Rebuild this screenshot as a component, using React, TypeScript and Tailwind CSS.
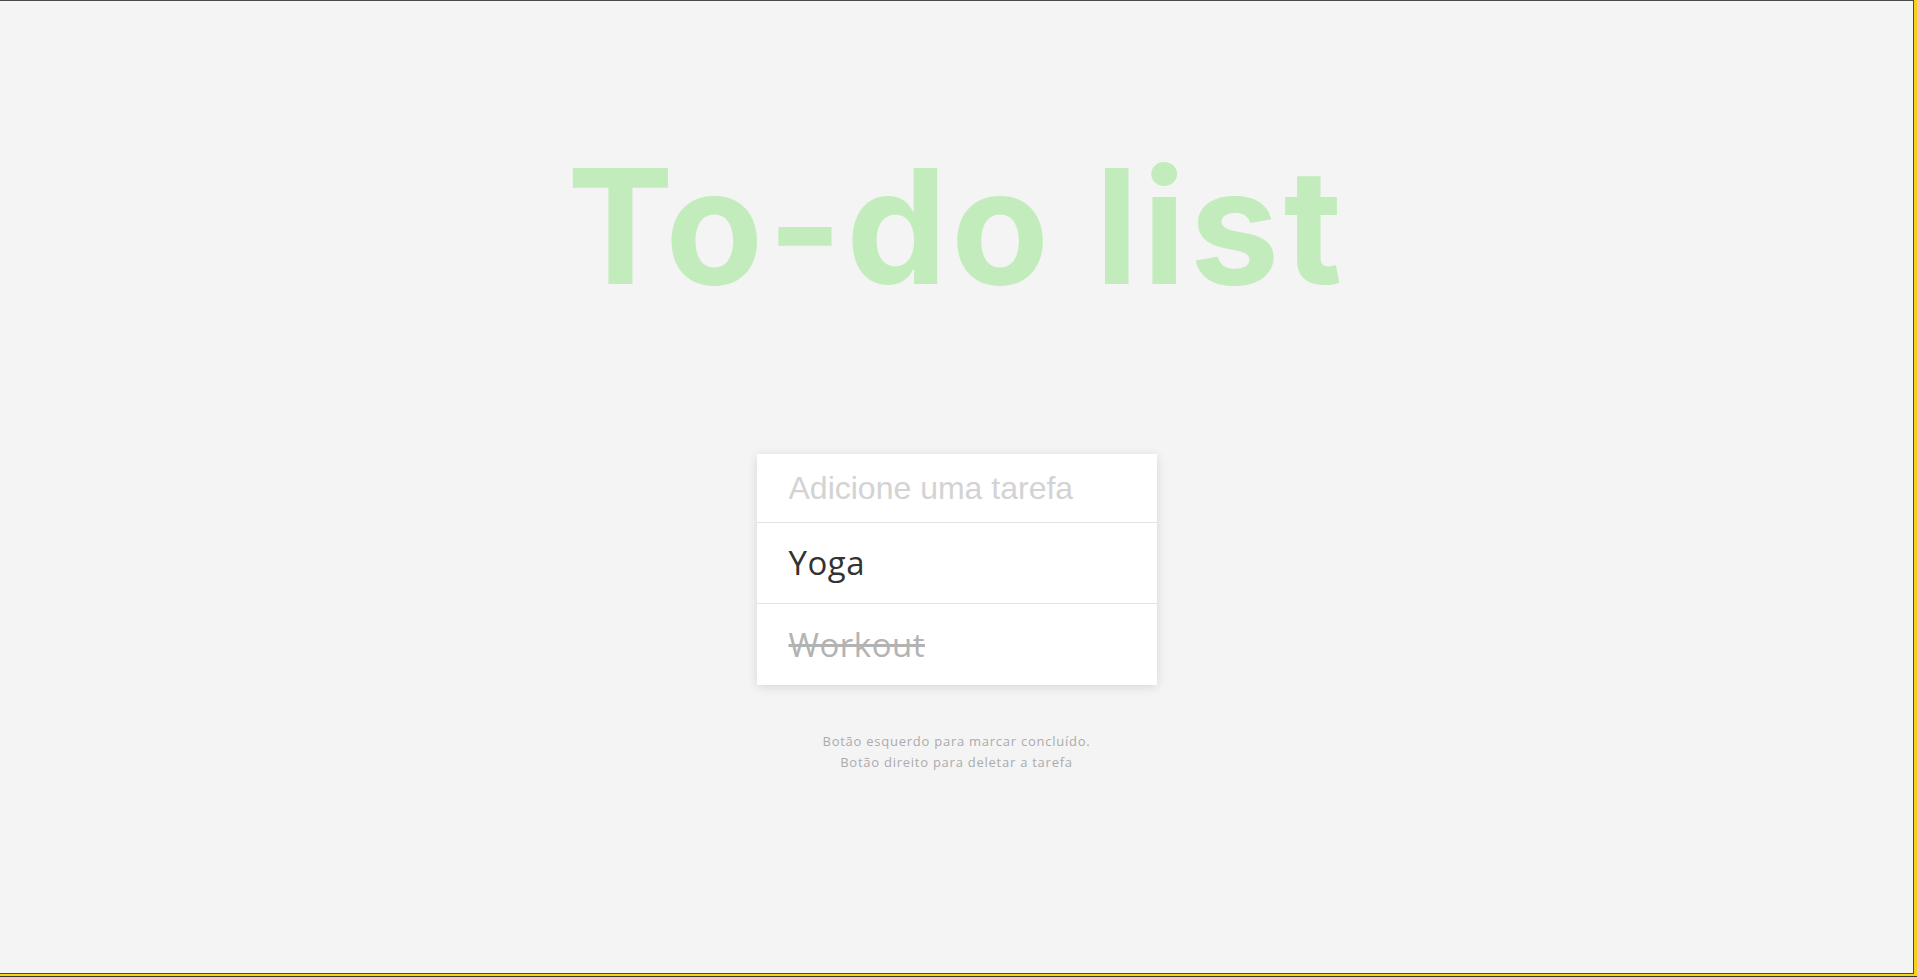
import { useState } from 'react';

type Task = { id: number; text: string; done: boolean };

export default function App() {
  const [tasks, setTasks] = useState<Task[]>([
    { id: 1, text: 'Yoga', done: false },
    { id: 2, text: 'Workout', done: true },
  ]);
  const [value, setValue] = useState('');

  const add = () => {
    if (!value.trim()) return;
    setTasks([...tasks, { id: Date.now(), text: value.trim(), done: false }]);
    setValue('');
  };

  return (
    <div className="h-screen w-full bg-[#f2d21a] border-b border-[#3a3a2a] flex flex-col">
      <div className="flex-1 mr-[3px] mb-[2px] bg-[#f4f4f4] border-t border-r border-b border-[#4a4a4a] flex flex-col items-center">
        {/* Title */}
        <h1 className="mt-[145px] text-[160px] leading-none font-bold text-[#c2ecbc] font-['Inter',sans-serif] tracking-[4px]">
          To-do list
        </h1>

        {/* Card */}
        <div className="mt-[148px] w-[400px] bg-white shadow-[0_2px_10px_rgba(0,0,0,0.12)]">
          <div className="h-[69px] border-b border-[#e3e3e3] flex items-center">
            <input
              value={value}
              onChange={(e) => setValue(e.target.value)}
              onKeyDown={(e) => e.key === 'Enter' && add()}
              placeholder="Adicione uma tarefa"
              className="w-full px-8 bg-transparent outline-none text-[32px] text-[#333] placeholder:text-[#d3d3d3] font-['Liberation_Sans',Arial,sans-serif]"
            />
          </div>
          {tasks.map((t, i) => (
            <div
              key={t.id}
              onClick={() => setTasks(tasks.map((x) => (x.id === t.id ? { ...x, done: !x.done } : x)))}
              onContextMenu={(e) => {
                e.preventDefault();
                setTasks(tasks.filter((x) => x.id !== t.id));
              }}
              className={`h-[81px] px-8 flex items-center text-[33px] tracking-[0.5px] font-['Open_Sans',sans-serif] cursor-pointer select-none ${
                i < tasks.length - 1 ? 'border-b border-[#e3e3e3]' : ''
              } ${t.done ? 'line-through text-[#b3b3b3]' : 'text-[#333]'}`}
            >
              {t.text}
            </div>
          ))}
        </div>

        {/* Hint */}
        <p className="mt-[46px] text-center text-[13px] leading-[21px] tracking-[0.75px] text-[#ababab] font-['Open_Sans',sans-serif]">
          Botão esquerdo para marcar concluído.
          <br />
          Botão direito para deletar a tarefa
        </p>
      </div>
    </div>
  );
}
